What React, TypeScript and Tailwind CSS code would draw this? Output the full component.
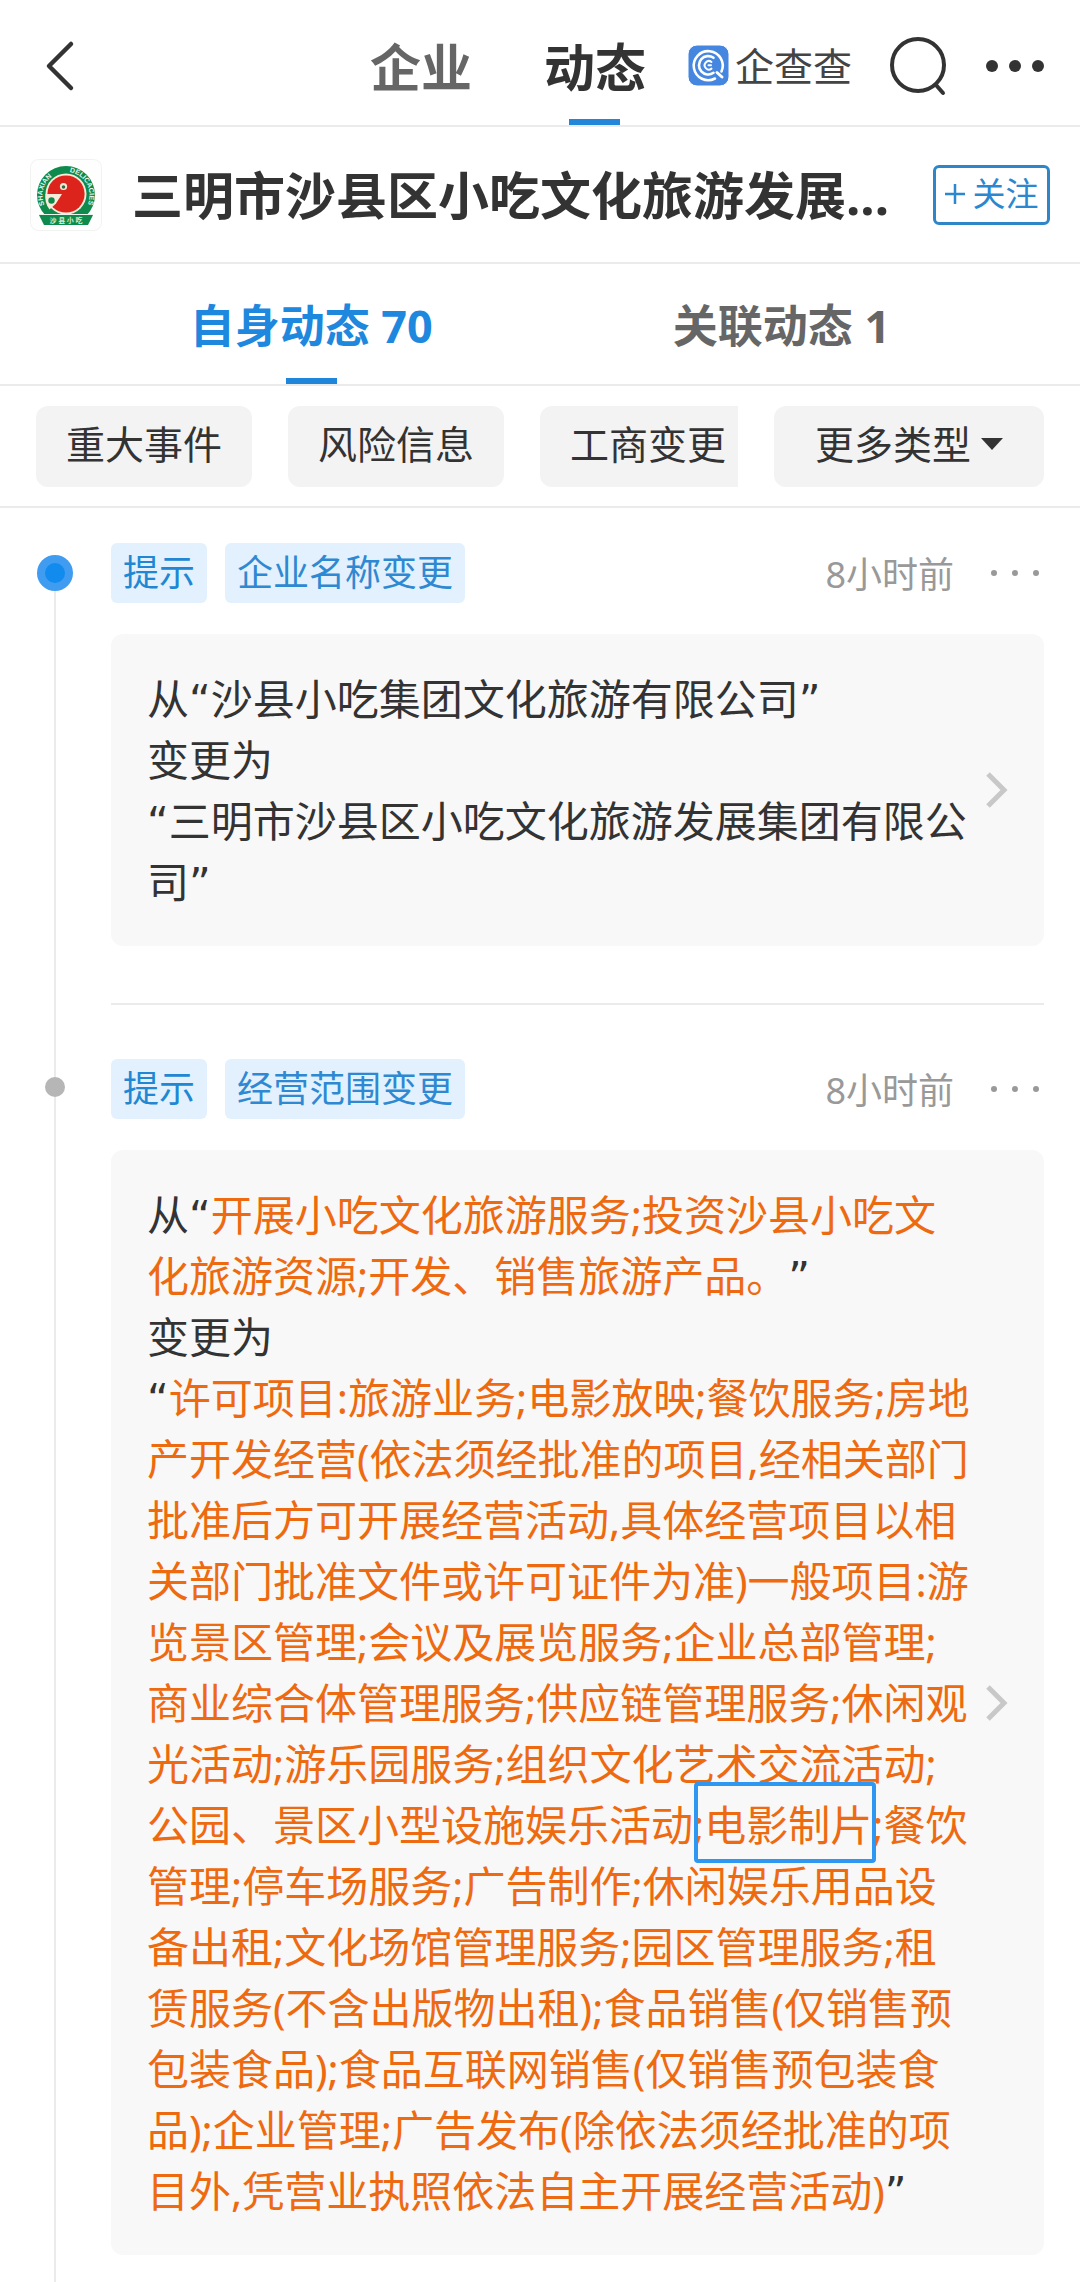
import React from "react";

function BackIcon() {
  return (
    <svg width="30" height="52" viewBox="0 0 30 52" fill="none" aria-hidden="true">
      <path d="M26 4 4 26l22 22" stroke="#333" strokeWidth="4.500" strokeLinecap="round" strokeLinejoin="round" />
    </svg>
  );
}

function SearchIcon() {
  return (
    <svg width="58" height="60" viewBox="0 0 58 60" fill="none" stroke="#333" strokeWidth="4" strokeLinecap="round" aria-hidden="true">
      <circle cx="29" cy="29" r="26" />
      <path d="m47 49 7 8" />
    </svg>
  );
}

function MoreIcon() {
  return (
    <svg width="58" height="12" viewBox="0 0 58 12" fill="#333" aria-hidden="true">
      <circle cx="6" cy="6" r="6" />
      <circle cx="29" cy="6" r="6" />
      <circle cx="52" cy="6" r="6" />
    </svg>
  );
}

function SmallMoreIcon() {
  return (
    <svg width="50" height="6" viewBox="0 0 50 6" fill="#999" aria-hidden="true">
      <circle cx="4" cy="3" r="3" />
      <circle cx="25" cy="3" r="3" />
      <circle cx="46" cy="3" r="3" />
    </svg>
  );
}

function BrandMark() {
  return (
    <svg width="41" height="41" viewBox="0 0 41 41" fill="none" stroke="#fff" aria-hidden="true">
      <rect width="41" height="41" rx="9" fill="#4486e0" />
      <path d="M27 33.500A14.500 14.500 0 1 1 33.500 26.500" strokeWidth="2.600" strokeLinecap="round" />
      <path d="m29 27.500 5 4.500" strokeWidth="3" strokeLinecap="round" />
      <path d="M25.500 12.800a9.200 9.200 0 1 0 0 15" strokeWidth="2.600" strokeLinecap="round" />
      <path d="M23.500 17a4.200 4.200 0 1 0 0 6.600M20.500 20.300h2.500" strokeWidth="2" strokeLinecap="round" />
    </svg>
  );
}

function CompanyLogo() {
  return (
    <svg width="72" height="72" viewBox="0 0 72 72" role="img" aria-label="沙县小吃" className="shrink-0">
      <rect x="0.5" y="0.5" width="71" height="71" rx="8" fill="#fdfefd" stroke="#f1f3f1" />
      <circle cx="36" cy="36" r="29" fill="#0d8a4c" />
      <circle cx="36" cy="35" r="20.5" fill="#f6ecd9" />
      <circle cx="36" cy="35" r="18.6" fill="#dc241c" />
      <path d="M15.500 35H32l-6 9.500-6.500 6A20.500 20.500 0 0 1 15.500 35Z" fill="#f6ecd9" />
      <circle cx="33.500" cy="27.500" r="3.600" fill="#f6ecd9" />
      <circle cx="33.500" cy="28" r="1.800" fill="#2f6b3f" />
      <circle cx="21.500" cy="41.500" r="3.200" fill="#0d8a4c" />
      <path id="logo-arc" d="M16.500 49.500A23.500 23.500 0 1 1 55.500 49.500" fill="none" />
      <text fill="#e9f5ec" fontSize="7" fontWeight="700" fontFamily="Liberation Sans">
        <textPath href="#logo-arc" startOffset="4">SHAXIAN</textPath>
        <textPath href="#logo-arc" startOffset="54">DELICACIES</textPath>
      </text>
      <path d="M9 56h54l-5 10H14Z" fill="#0d8a4c" />
      <path d="M9 55.500h54" stroke="#e9f5ec" strokeWidth="1" />
      <text x="36" y="64" textAnchor="middle" fill="#d5ecdc" fontSize="7" fontWeight="700" fontFamily="Noto Sans CJK SC">
        沙 县 小 吃
      </text>
    </svg>
  );
}

function Chevron() {
  return (
    <svg width="22" height="36" viewBox="0 0 22 36" fill="none" className="shrink-0" aria-hidden="true">
      <path d="m2 2 16 16L2 34" stroke="#c8c8c8" strokeWidth="5" />
    </svg>
  );
}

type EventProps = {
  title: string;
  time: string;
  active?: boolean;
  last?: boolean;
  children: React.ReactNode;
};

function TimelineEvent({ title, time, active, last, children }: EventProps) {
  return (
    <li className="flex">
      <div className="mr-px flex w-[110px] shrink-0 flex-col items-center">
        <div className={active ? "h-[47px] w-0.5" : "h-[72px] w-0.5 bg-[#ebebeb]"} />
        {active ? (
          <span className="flex size-9 items-center justify-center rounded-full bg-[#3f9cf0]">
            <span className="size-5 rounded-full bg-[#118bee]" />
          </span>
        ) : (
          <span className="size-5 rounded-full bg-[#b6b6b6]" />
        )}
        <div className="w-0.5 grow bg-[#ebebeb]" />
      </div>
      <div className={active ? "mr-9 min-w-0 flex-1 pt-[35px]" : "mr-9 min-w-0 flex-1 pt-[54px]"}>
        <div className="flex items-center">
          <span className="rounded-md bg-[#e2f1fd] px-3 text-4xl leading-[60px] text-[#2187d3]">提示</span>
          <span className="ml-[18px] rounded-md bg-[#e2f1fd] px-3 text-4xl leading-[60px] text-[#2f89d2]">{title}</span>
          <time className="ml-auto pt-1 text-4xl leading-[56px] text-[#999]">{time}</time>
          <button type="button" aria-label="更多操作" className="ml-9 mr-1 flex h-[60px] items-center">
            <SmallMoreIcon />
          </button>
        </div>
        <a href="#detail" className="mt-[31px] flex items-center gap-1 rounded-xl bg-[#f8f8f8] py-[34px] pr-9 pl-9">
          <p className="min-w-0 flex-1 text-[42px] leading-[61px] text-[#333] [text-spacing-trim:space-all]">{children}</p>
          <Chevron />
        </a>
        {!last && <hr className="mt-[57px] border-t-2 border-[#ebebeb]" />}
        {last && <div className="h-7" />}
      </div>
    </li>
  );
}

function Quote({ children }: { children: string }) {
  return <span className="font-['DejaVu_Sans',sans-serif] leading-none">{children}</span>;
}

function Orange({ children }: { children: React.ReactNode }) {
  return <span className="text-[#ee6a10]">{children}</span>;
}

const scopeLines = [
  "许可项目:旅游业务;电影放映;餐饮服务;房地",
  "产开发经营(依法须经批准的项目,经相关部门",
  "批准后方可开展经营活动,具体经营项目以相",
  "关部门批准文件或许可证件为准)一般项目:游",
  "览景区管理;会议及展览服务;企业总部管理;",
  "商业综合体管理服务;供应链管理服务;休闲观",
  "光活动;游乐园服务;组织文化艺术交流活动;",
];

const scopeLinesAfter = [
  "管理;停车场服务;广告制作;休闲娱乐用品设",
  "备出租;文化场馆管理服务;园区管理服务;租",
  "赁服务(不含出版物出租);食品销售(仅销售预",
  "包装食品);食品互联网销售(仅销售预包装食",
  "品);企业管理;广告发布(除依法须经批准的项",
];

const chips = ["重大事件", "风险信息", "工商变更"];

export default function App() {
  return (
    <div lang="zh-CN" className="min-h-screen bg-white font-['Noto_Sans','Noto_Sans_CJK_SC',sans-serif] text-[#333]">
      <header className="flex h-[127px] items-stretch border-b-2 border-[#ebebeb] pr-9">
        <button type="button" aria-label="返回" className="flex items-center pl-[45px] pt-1.5">
          <BackIcon />
        </button>
        <nav className="ml-auto flex gap-[72px] text-[51px] font-bold">
          <a href="#company" className="pt-[34px] leading-[66px] text-[#666]">企业</a>
          <a href="#news" aria-current="page" className="flex flex-col items-center pt-[34px] leading-[66px]">
            动态
            <span className="mt-auto h-1.5 w-[51px] bg-[#2486d8]" />
          </a>
        </nav>
        <div className="ml-[42px] flex items-center gap-1.5 pt-1.5">
          <BrandMark />
          <span className="text-[39px] leading-[60px] text-[#444]">企查查</span>
        </div>
        <button type="button" aria-label="搜索" className="ml-[37px] flex items-center pt-1.5">
          <SearchIcon />
        </button>
        <button type="button" aria-label="更多" className="ml-[39px] flex items-center pt-1.5">
          <MoreIcon />
        </button>
      </header>

      <section className="flex h-[137px] items-center border-b-2 border-[#ebebeb] px-[30px]">
        <CompanyLogo />
        <h1 className="ml-[30px] min-w-0 flex-1 truncate text-[51px] leading-[72px] font-bold">
          三明市沙县区小吃文化旅游发展...
        </h1>
        <button
          type="button"
          className="ml-6 flex h-[60px] w-[117px] shrink-0 items-center justify-center gap-2 rounded-md border-3 border-[#2e86c9] pb-0.5 text-[33px] text-[#2b88d0]"
        >
          <svg width="20" height="20" viewBox="0 0 20 20" stroke="currentColor" strokeWidth="2.500" aria-hidden="true">
            <path d="M10 0v20M0 10h20" />
          </svg>
          关注
        </button>
      </section>

      <nav className="flex h-[122px] justify-center gap-60 border-b-2 border-[#ebebeb] text-[45px] font-bold">
        <a href="#own" aria-current="page" className="flex flex-col items-center pt-8 leading-[60px] text-[#1e87de]">
          自身动态 70
          <span className="mt-auto h-1.5 w-[51px] bg-[#2086dc]" />
        </a>
        <a href="#related" className="pt-8 leading-[60px] text-[#666]">关联动态 1</a>
      </nav>

      <div className="flex h-[122px] items-center gap-9 border-b-2 border-[#ebebeb] px-9">
        <div className="flex min-w-0 flex-1 gap-9 overflow-hidden">
          {chips.map((chip) => (
            <button key={chip} type="button" className="h-[81px] w-[216px] shrink-0 rounded-xl bg-[#f3f3f3] pb-1 text-[39px]">
              {chip}
            </button>
          ))}
        </div>
        <button
          type="button"
          className="flex h-[81px] w-[270px] shrink-0 items-center justify-center gap-2.5 rounded-xl bg-[#f3f3f3] pb-1 text-[39px]"
        >
          更多类型
          <svg width="22" height="12" viewBox="0 0 22 12" fill="#333" aria-hidden="true">
            <path d="M0 0h22L11 12Z" />
          </svg>
        </button>
      </div>

      <ul>
        <TimelineEvent title="企业名称变更" time="8小时前" active>
          从<Quote>“</Quote>沙县小吃集团文化旅游有限公司<Quote>”</Quote>
          <br />
          变更为
          <br />
          <Quote>“</Quote>三明市沙县区小吃文化旅游发展集团有限公
          <br />
          司<Quote>”</Quote>
        </TimelineEvent>
        <TimelineEvent title="经营范围变更" time="8小时前" last>
          从<Quote>“</Quote>
          <Orange>开展小吃文化旅游服务;投资沙县小吃文</Orange>
          <br />
          <Orange>化旅游资源;开发、销售旅游产品。</Orange>
          <Quote>”</Quote>
          <br />
          变更为
          <br />
          <Quote>“</Quote>
          <Orange>
            {scopeLines.map((line) => (
              <React.Fragment key={line}>
                {line}
                <br />
              </React.Fragment>
            ))}
            公园、景区小型设施娱乐活动;
            <mark className="relative bg-transparent text-inherit">
              电影制片
              <span className="absolute -top-3.5 -right-1 -bottom-2.5 -left-2.5 rounded-sm border-4 border-[#2d97f1]" />
            </mark>
            ;餐饮
            <br />
            {scopeLinesAfter.map((line) => (
              <React.Fragment key={line}>
                {line}
                <br />
              </React.Fragment>
            ))}
            目外,凭营业执照依法自主开展经营活动)
          </Orange>
          <Quote>”</Quote>
        </TimelineEvent>
      </ul>
    </div>
  );
}
